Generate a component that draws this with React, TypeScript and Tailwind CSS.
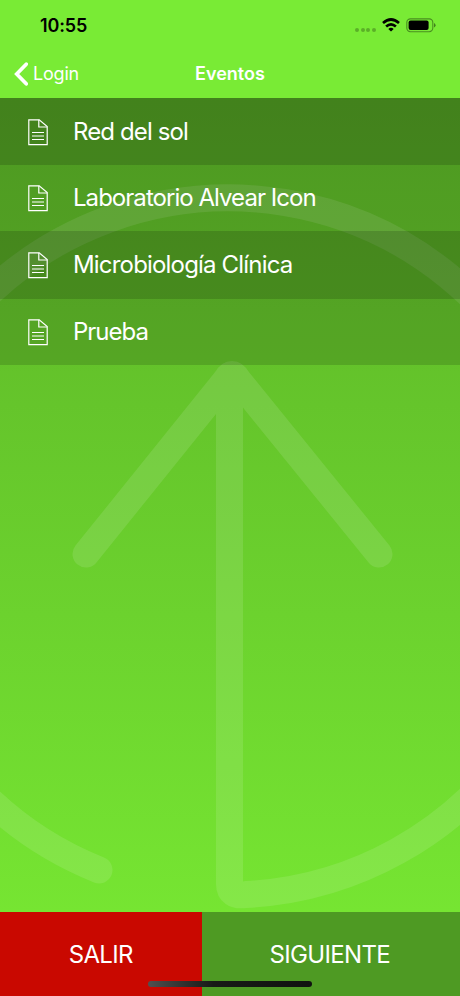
interface Evento {
  id: number;
  name: string;
  row: string;
  text: string;
}

const eventos: Evento[] = [
  { id: 1, name: "Red del sol", row: "h-[67px] bg-black/27", text: "tracking-[-0.88px]" },
  { id: 2, name: "Laboratorio Alvear Icon", row: "h-[66px] bg-black/14", text: "tracking-[-0.96px]" },
  { id: 3, name: "Microbiología Clínica", row: "h-[68px] bg-black/27", text: "tracking-[-0.82px]" },
  { id: 4, name: "Prueba", row: "h-[66px] bg-black/14", text: "tracking-[-1px]" },
];

function DocumentIcon() {
  return (
    <svg className="ml-7 mt-px h-[27px] w-5 shrink-0" viewBox="0 0 20 27" fill="none" stroke="white" strokeWidth="1.2">
      <path d="M0.8 0.8H11.2L19.2 7.5V25.6H0.8Z" />
      <path d="M10.8 0.8V8H19.2" />
      <path d="M4 13.5H16M4 17H16M4 20.5H16" />
    </svg>
  );
}

function WifiIcon() {
  return (
    <svg className="h-[14px] w-[18px]" viewBox="0 0 18 14" fill="none" stroke="black" strokeWidth="2.7">
      <path d="M1 5Q9 -2 17 5" />
      <path d="M4.1 8.5Q9 4.2 13.9 8.5" />
      <path d="M9 13.6L6.3 10.9Q9 8.8 11.7 10.9Z" fill="black" stroke="none" />
    </svg>
  );
}

function BatteryIcon() {
  return (
    <svg className="h-[15px] w-[30px]" viewBox="0 0 30 15" fill="none">
      <rect x="0.8" y="0.9" width="26" height="12.8" rx="3.6" stroke="black" strokeOpacity="0.4" strokeWidth="1.1" />
      <rect x="2.6" y="2.6" width="20" height="9.4" rx="2" fill="black" />
      <path d="M28 5.1Q29.6 5.8 29.6 7.3T28 9.5Z" fill="black" fillOpacity="0.45" />
    </svg>
  );
}

function Watermark() {
  return (
    <svg className="pointer-events-none absolute inset-0 h-full w-full" viewBox="0 98 460 814">
      <path
        className="opacity-11"
        d="M99 870A348.5 348.5 0 1 1 246 894.5Q229 897 229.5 883V376M86 554L226 380Q232 369 238 380L379 554"
        fill="none"
        stroke="white"
        strokeWidth="27"
        strokeLinecap="round"
        strokeLinejoin="round"
      />
    </svg>
  );
}

export default function App() {
  return (
    <div className="relative flex h-[996px] w-[460px] flex-col overflow-hidden bg-[#79eb35] font-['Inter',sans-serif] text-white">
      {/* Status bar */}
      <div className="flex h-[50px] shrink-0 items-center justify-between pl-10 pr-6 text-black">
        <span className="pt-[2px] text-lg font-semibold tracking-[-0.15px]">10:55</span>
        <div className="flex items-center">
          <div className="mr-[6px] mt-[9px] flex gap-[1.6px]">
            {[0, 1, 2, 3].map((dot) => (
              <span key={dot} className="size-1 rounded-full bg-black/25" />
            ))}
          </div>
          <WifiIcon />
          <div className="ml-[6px]">
            <BatteryIcon />
          </div>
        </div>
      </div>

      {/* Nav bar */}
      <header className="grid h-[47px] shrink-0 grid-cols-3 items-center">
        <button className="flex items-center pl-[14px] text-[18px] tracking-[-0.2px]">
          <svg className="mr-[5px] h-6 w-[14px]" viewBox="0 0 14 24" fill="none" stroke="white" strokeWidth="3.7">
            <path d="M12.2 2.2L2.7 12L12.2 21.8" strokeLinecap="round" />
          </svg>
          Login
        </button>
        <h1 className="text-center text-[18px] font-semibold tracking-[0px]">Eventos</h1>
      </header>

      <main className="relative mt-px min-h-0 flex-1 bg-linear-to-b from-[#5bb227] to-[#76e532]">
        <Watermark />
        <ul className="relative">
          {eventos.map((evento) => (
            <li key={evento.id} className={`flex items-center ${evento.row}`}>
              <DocumentIcon />
              <span className={`ml-[25px] text-2xl ${evento.text}`}>{evento.name}</span>
            </li>
          ))}
        </ul>
      </main>

      <footer className="flex h-[84px] shrink-0 text-2xl">
        <button className="w-[201.5px] bg-[#c90800] pt-px tracking-[-0.7px]">SALIR</button>
        <button className="flex-1 bg-[#4e9a23] pt-px pr-[2px] tracking-[-0.65px]">SIGUIENTE</button>
      </footer>

      {/* Home indicator */}
      <div className="absolute bottom-[9px] left-[148px] h-[6px] w-[164px] rounded-full bg-linear-to-r from-[#505050] via-[#181a17] via-40% to-[#101210]" />
    </div>
  );
}
